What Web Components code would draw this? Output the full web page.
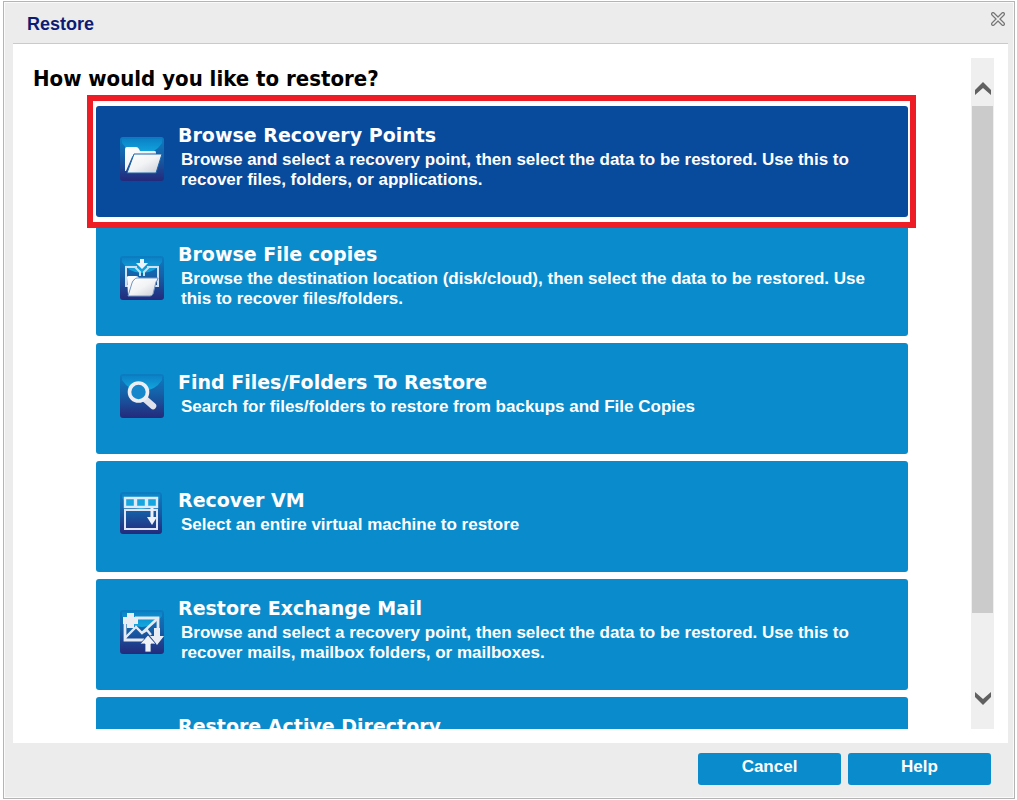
<!DOCTYPE html>
<html lang="en">
<head>
<meta charset="utf-8">
<title>Restore</title>
<style>
  html, body { height: 100%; }
  body { margin: 0; background: #fff; font-family: "Liberation Sans", Arial, sans-serif; }
</style>
</head>
<body>
<restore-dialog heading="Restore">
  <h2 slot="question">How would you like to restore?</h2>
  <restore-option icon="folder" lines="2" selected>
    <span slot="title">Browse Recovery Points</span>
    Browse and select a recovery point, then select the data to be restored. Use this to recover files, folders, or applications.
  </restore-option>
  <restore-option icon="copies" lines="2">
    <span slot="title">Browse File copies</span>
    Browse the destination location (disk/cloud), then select the data to be restored. Use this to recover files/folders.
  </restore-option>
  <restore-option icon="search">
    <span slot="title">Find Files/Folders To Restore</span>
    Search for files/folders to restore from backups and File Copies
  </restore-option>
  <restore-option icon="vm">
    <span slot="title">Recover VM</span>
    Select an entire virtual machine to restore
  </restore-option>
  <restore-option icon="mail" lines="2">
    <span slot="title">Restore Exchange Mail</span>
    Browse and select a recovery point, then select the data to be restored. Use this to recover mails, mailbox folders, or mailboxes.
  </restore-option>
  <restore-option lines="2">
    <span slot="title">Restore Active Directory</span>
  </restore-option>
  <dialog-button slot="actions">Cancel</dialog-button>
  <dialog-button slot="actions">Help</dialog-button>
</restore-dialog>

<script>
const ICONS = {
  folder: `
    <path d="M5 12q0-2 2-2h9q2 0 3 2l1 2h15q1 0 1 2v2H15q-2 0-3 2L6 34H5z" fill="url(#w)"/>
    <path d="M14 17h28l-6 19H7z" fill="url(#w)" stroke="#1a63ab" stroke-width="1"/>`,
  copies: `
    <path d="M17 11H6v19h5M27 11h11v19h-5" fill="none" stroke="#cfe0f2" stroke-width="2"/>
    <path d="M20 3h4v4h4l-6 6-6-6h4z" fill="#eef3fa"/>
    <path d="M15 11l5 5v4M29 11l-5 5v4" fill="none" stroke="#bfe2f5" stroke-width="2"/>
    <path d="M7 21q0-1 2-1h7q2 0 3 2h17v3H14L9 39H8z" fill="url(#w)"/>
    <path d="M14 24q1-2 3-2h21l-1 3q-1 0-1 1l-3 12q-1 2-3 2H8l4-13q1-3 2-3z" fill="url(#w)" stroke="#7196c5" stroke-width="1"/>`,
  search: `
    <path d="M25 25l8 7" stroke="#dfe2ea" stroke-width="6.500" stroke-linecap="round"/>
    <circle cx="18.500" cy="18" r="9" fill="#1488cb" stroke="#eceef3" stroke-width="3.600"/>`,
  vm: `
    <path d="M5 18h32v19H5z" fill="none" stroke="#dfe5f2" stroke-width="2"/>
    <g fill="#15a5df" stroke="#dcebf7" stroke-width="2.400"><path d="M5 6h10v9H5zM16 6h10v9H16zM27 6h10v9H27z"/></g>
    <path d="M32 16v11" stroke="#eef1f8" stroke-width="3"/>
    <path d="M27 25h10l-5 8z" fill="#eef1f8"/>`,
  mail: `
    <path d="M5 13v17h19M15 8h23v12" fill="none" stroke="#e5e9f2" stroke-width="2.800"/>
    <path d="M5 28l11-11 6 6 15-14M22 23l5-3 4 5" fill="none" stroke="#e5e9f2" stroke-width="2.400"/>
    <path d="M7 3h7v4h4v7h-4v4H7v-4H3V7h4z" fill="#e9ecf3"/>
    <path d="M34 18h6v8h4l-7 9-7-9h4z" fill="#e9ecf3"/>
    <path d="M28 25l8 9h-5v8h-6v-8h-5z" fill="#f1f2f6" stroke="#20408f" stroke-width=".8"/>`
};

class OptionIcon extends HTMLElement {
  connectedCallback() {
    const name = this.getAttribute('name');
    const size = name === 'vm' ? 42 : 44;
    this.attachShadow({ mode: 'open' }).innerHTML = `
      <style>
        :host { display: block; width: 44px; height: 44px; }
        svg { display: block; }
      </style>
      ${ICONS[name] ? `<svg width="44" height="44" viewBox="0 0 44 44" aria-hidden="true">
        <defs>
          <linearGradient id="b" x2="0" y2="1">
            <stop offset="0" stop-color="#0c7dc2"/><stop offset=".45" stop-color="#1560a8"/><stop offset="1" stop-color="#25297b"/>
          </linearGradient>
          <linearGradient id="g" x2="0" y2="1">
            <stop offset="0" stop-color="#0b82c6"/><stop offset="1" stop-color="#12a9e0"/>
          </linearGradient>
          <linearGradient id="w" x2="1" y2="1">
            <stop offset="0" stop-color="#fff"/><stop offset=".5" stop-color="#f2f3f5"/><stop offset="1" stop-color="#c9cbd3"/>
          </linearGradient>
        </defs>
        <rect width="${size}" height="${size}" rx="3" fill="url(#b)"/>
        <path d="M2 2h${size - 4}v4q-7 11-${size / 2 - 2} 11T2 6z" fill="url(#g)"/>
        ${ICONS[name]}
      </svg>` : ''}`;
  }
}
customElements.define('option-icon', OptionIcon);

class RestoreOption extends HTMLElement {
  connectedCallback() {
    this.attachShadow({ mode: 'open' }).innerHTML = `
      <style>
        :host { display: block; position: relative; }
        :host([selected]) { z-index: 1; margin-bottom: 1px; }
        :host([selected])::before {
          content: ""; position: absolute; z-index: -1; inset: -11px -8px -11px -9px;
          background: #fff; border: 6px solid #ee1c25;
        }
        button {
          display: flex; align-items: center; gap: 14px;
          box-sizing: border-box; width: 100%; min-height: 111px; margin: 0;
          padding: 0 22px 11px 24px; border: 0; border-radius: 3px;
          background: #0a8ccc; color: #fff; font: inherit; text-align: left; cursor: pointer;
        }
        :host([selected]) button { background: #084a9c; }
        option-icon { flex: none; margin-top: 6px; }
        .text { flex: 1; display: block; }
        .title { display: block; padding-bottom: 2px; font: 700 19px/26px "DejaVu Sans", Verdana, sans-serif; }
        .desc { display: block; padding-left: 3px; font-size: 17px; line-height: 20px; font-weight: 700; }
        :host([lines="2"]) .desc { min-height: 40px; }
      </style>
      <button type="button">
        <option-icon name="${this.getAttribute('icon') || ''}"></option-icon>
        <span class="text">
          <span class="title"><slot name="title"></slot></span>
          <span class="desc"><slot></slot></span>
        </span>
      </button>`;
  }
}
customElements.define('restore-option', RestoreOption);

class DialogButton extends HTMLElement {
  connectedCallback() {
    this.attachShadow({ mode: 'open' }).innerHTML = `
      <style>
        :host { display: block; width: 143px; }
        button {
          display: block; width: 100%; height: 32px; margin: 0; padding: 0 0 4px;
          border: 0; border-radius: 3px; background: #0a8ccc; color: #fff;
          font: 700 17px/20px "Liberation Sans", Arial, sans-serif; cursor: pointer;
        }
      </style>
      <button type="button"><slot></slot></button>`;
  }
}
customElements.define('dialog-button', DialogButton);

class ScrollRail extends HTMLElement {
  connectedCallback() {
    this.attachShadow({ mode: 'open' }).innerHTML = `
      <style>
        :host { display: flex; flex-direction: column; width: 23px; background: #efefef; }
        button {
          display: flex; align-items: center; justify-content: center;
          margin: 0; padding: 0; border: 0; background: none; height: 60px;
        }
        .up { height: 48px; padding-top: 12px; }
        .track { flex: 1; padding: 0 1px; }
        .thumb { height: 90%; background: #cbcbcb; }
      </style>
      <button class="up" type="button" aria-label="Scroll up"><svg width="16" height="14"><path d="M0 9l8-8 8 8v5L8 7l-8 7z" fill="#606060"/></svg></button>
      <div class="track"><div class="thumb"></div></div>
      <button type="button" aria-label="Scroll down"><svg width="16" height="14"><path d="M0 5l8 8 8-8V0L8 7 0 0z" fill="#606060"/></svg></button>`;
  }
}
customElements.define('scroll-rail', ScrollRail);

class RestoreDialog extends HTMLElement {
  connectedCallback() {
    this.attachShadow({ mode: 'open' }).innerHTML = `
      <style>
        :host {
          display: flex; flex-direction: column; box-sizing: border-box; height: 100vh;
          padding: 1px 2px 1px 3px;
        }
        .frame {
          flex: 1; min-height: 0; display: flex; flex-direction: column;
          border: 1px solid #b4b4b4; box-shadow: inset 0 0 0 1px #fafafa;
          background: #ececec; padding: 0 6px 0 9px;
        }
        header {
          display: flex; align-items: center; justify-content: space-between;
          height: 41px; padding: 0 3px 0 14px; border-bottom: 1px solid #cacaca;
        }
        h1 { margin: 2px 0 0; font-size: 18px; line-height: 22px; color: #0c1c74; }
        .close { margin: 0 0 7px; padding: 0; border: 0; background: none; }
        .close svg { display: block; }
        main {
          flex: 1; min-height: 0; display: flex; gap: 20px;
          padding: 14px 14px 14px 20px; background: #fff;
        }
        .list { flex: 1; min-width: 0; overflow: hidden; }
        ::slotted(h2) {
          margin: 0; padding-top: 6px; color: #000;
          font: 700 22px/30px "DejaVu Sans Condensed", "DejaVu Sans", sans-serif;
          font-stretch: condensed;
        }
        .options { display: flex; flex-direction: column; gap: 7px; padding: 12px 43px 0 63px; }
        footer { display: flex; justify-content: flex-end; gap: 7px; padding: 10px 17px 13px; }
      </style>
      <div class="frame" role="dialog" aria-labelledby="t">
        <header>
          <h1 id="t">${this.getAttribute('heading')}</h1>
          <button class="close" type="button" aria-label="Close"><svg width="14" height="14">
            <path d="M2 2l10 10M12 2L2 12" stroke="#777" stroke-width="4" stroke-linecap="round"/>
            <path d="M2 2l10 10M12 2L2 12" stroke="#efefef" stroke-width="1.600" stroke-linecap="round"/>
          </svg></button>
        </header>
        <main>
          <div class="list">
            <slot name="question"></slot>
            <div class="options"><slot></slot></div>
          </div>
          <scroll-rail></scroll-rail>
        </main>
        <footer><slot name="actions"></slot></footer>
      </div>`;
  }
}
customElements.define('restore-dialog', RestoreDialog);
</script>
</body>
</html>
